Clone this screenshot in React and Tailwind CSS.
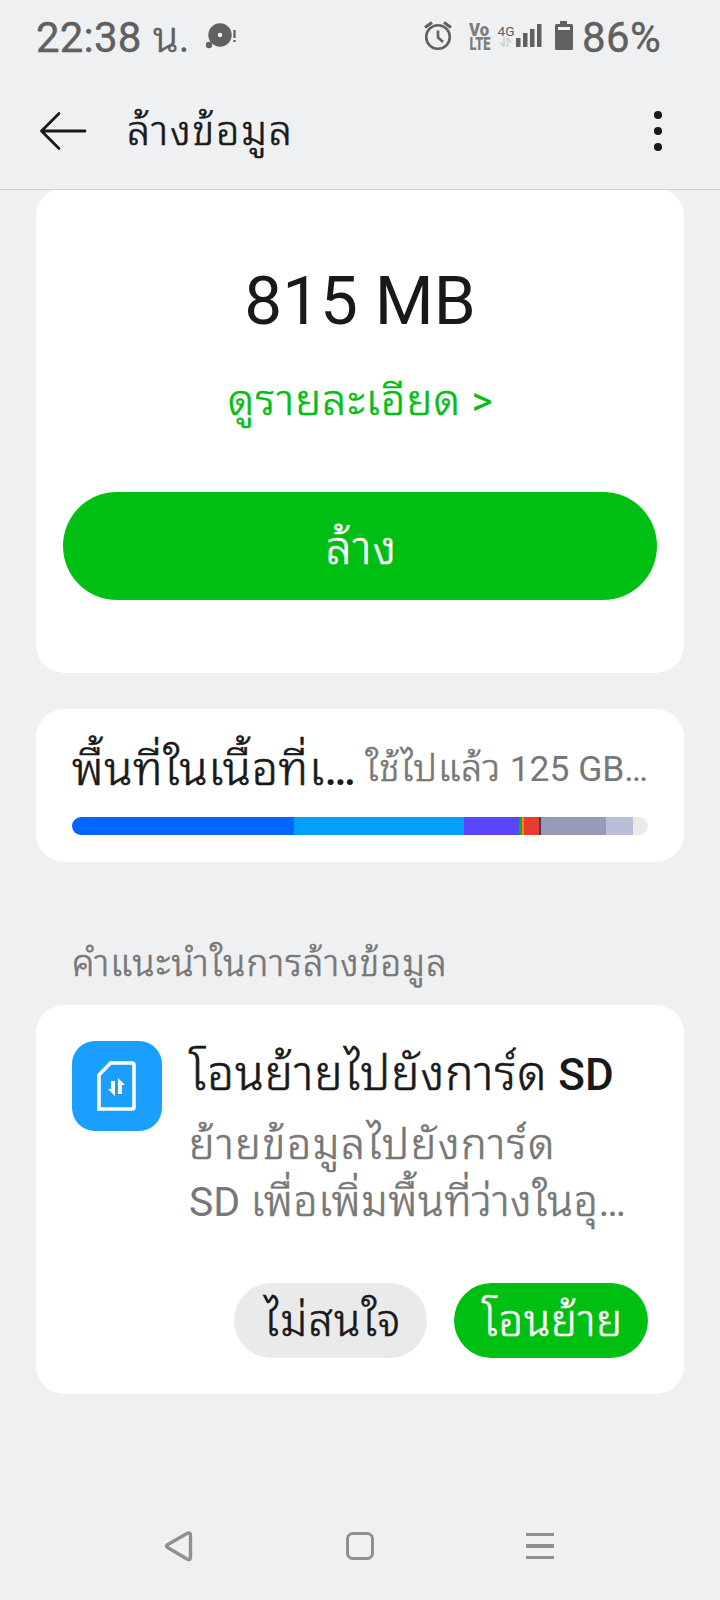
import React from 'react';

const segments = [
  'w-[222px] bg-[#0066ff]',
  'w-[170px] bg-[#00a0ff]',
  'w-[55px] bg-[#5b45ff]',
  'w-[3px] bg-[#00b81c]',
  'w-[2px] bg-[#ff8a00]',
  'w-[15px] bg-[#eb3b30]',
  'w-[2px] bg-[#3d4058]',
  'w-[65px] bg-[#979bb8]',
  'w-[27px] bg-[#b9bdd7]',
  'w-[15px] bg-[#eaeaea]',
];

function Thai({ className = '', children }) {
  return (
    <span className={`font-['Noto_Sans_Thai_Looped','Loma',sans-serif] font-light leading-[0] [-webkit-text-stroke:0.6px] ${className}`}>
      {children}
    </span>
  );
}

function StatusBar() {
  return (
    <div className="flex h-[76px] items-start text-[#5f6060]">
      <span className="ml-[36px] mt-[13px] w-[107px] text-[42px] leading-[50px] tracking-[0.2px] whitespace-nowrap [-webkit-text-stroke:0.4px]">22:38</span>
      <span className="ml-[10px] mt-[13px] w-[37px] text-[42px] leading-[50px] whitespace-nowrap"><Thai className="text-[42px]">น</Thai>.</span>
      <svg className="ml-[15px] mt-[20px]" width="34" height="32" viewBox="0 0 34 32">
        <circle cx="15" cy="15" r="7" fill="none" stroke="#5f6060" strokeWidth="9.4" />
        <circle cx="4" cy="25" r="3.2" fill="#5f6060" />
        <path d="M29.5 10v8M29.5 20v2" stroke="#5f6060" strokeWidth="2.2" />
      </svg>
      <div className="flex-1" />
      <svg className="mt-[20px] shrink-0" width="152" height="34" viewBox="0 0 152 34" fill="none">
        <g stroke="#5f6060" strokeWidth="2.6">
          <circle cx="14" cy="17" r="11.800" />
          <path d="M14 10.500v7l5 4.500" />
          <path d="M1 7.500L8 2.500M20 2.500l7 5" strokeWidth="3" />
        </g>
        <g fill="#7b7c7c" fontFamily="Roboto, sans-serif" fontWeight="900">
          <text x="45" y="15.500" fontSize="18.500" textLength="20" lengthAdjust="spacingAndGlyphs">Vo</text>
          <text x="45.500" y="30" fontSize="18.500" textLength="21" lengthAdjust="spacingAndGlyphs">LTE</text>
        </g>
        <text x="73.500" y="16" fontSize="13.500" fontFamily="Roboto, sans-serif" fill="#5f6060" textLength="17" lengthAdjust="spacingAndGlyphs">4G</text>
        <path d="M80 17v9M83.500 27v-9M76.500 22.500l3.500 4M87 22.500L83.500 18" stroke="#cfd0d1" strokeWidth="1.8" />
        <path d="M92 18h4.500v9h-4.500zM99 13h4.500v14h-4.500zM106 9h4.500v18h-4.500zM113 4h4.500v23h-4.500z" fill="#5f6060" />
        <path fillRule="evenodd" d="M136 1h7v3h4.500q1.500 0 1.500 1.500V28.500q0 1.500-1.500 1.500h-15q-1.500 0-1.500-1.500V5.500Q131 4 132.500 4H136zM134 7v3h12V7z" fill="#5f6060" />
      </svg>
      <span className="ml-[6px] mr-[60px] mt-[13px] w-[78px] text-[42px] leading-[50px] whitespace-nowrap tracking-[0.4px] [-webkit-text-stroke:0.4px]">86%</span>
    </div>
  );
}

function Header() {
  return (
    <header className="flex h-[114px] items-center border-b border-[#cfd0d2] text-[#191919]">
      <svg className="ml-[39px] -mt-[4px]" width="48" height="40" viewBox="0 0 48 40" fill="none" stroke="#191919" strokeWidth="2.8" strokeLinecap="round" strokeLinejoin="round">
        <path d="M20 2.500L2.500 20L20 37.500M2.500 20H46" />
      </svg>
      <h1 className="-mt-[1px] ml-[40px] h-[60px] flex-1 text-[40px] leading-[60px]"><Thai className="text-[41.500px] tracking-[1.6px]">ล้างข้อมูล</Thai></h1>
      <div className="mr-[58px] -mt-[4px] flex flex-col gap-2">
        <i className="size-2 rounded-full bg-[#191919]" />
        <i className="size-2 rounded-full bg-[#191919]" />
        <i className="size-2 rounded-full bg-[#191919]" />
      </div>
    </header>
  );
}

export default function App() {
  return (
    <div className="h-[1600px] w-[720px] overflow-hidden bg-[#eff0f2] font-['Roboto','Loma','Noto_Sans',sans-serif] text-[#191919]">
      <StatusBar />
      <Header />
      <main className="px-9">
        <section className="-mt-px h-[484px] overflow-hidden border-t border-[#cfd0d2]">
          <div className="-mt-[2px] h-[485px] rounded-[28px] bg-white px-[27px] pt-[73px] text-center">
            <p className="h-[80px] text-[67.500px] leading-[80px] whitespace-nowrap">815 MB</p>
            <p className="mt-[31px] h-[60px] text-[40px] leading-[60px] whitespace-nowrap text-[#00bf13]"><Thai className="text-[43px] tracking-[1.3px]">ดูรายละเอียด</Thai> &gt;</p>
            <button className="mt-[60px] h-[108px] w-full rounded-full bg-[#00bf13] pt-[6px] pl-[3px] text-[44px] leading-[60px] text-white"><Thai className="text-[46.500px] tracking-[1.2px]">ล้าง</Thai></button>
          </div>
        </section>
        <section className="mt-9 h-[153px] rounded-[28px] bg-white px-9 pt-[30px]">
          <div className="flex h-[78px] items-start whitespace-nowrap">
            <span className="mt-px w-[294px] text-[44px] leading-[60px]"><Thai className="text-[46.500px] tracking-[0.6px]">พื้นที่ในเนื้อที่เ</Thai><span className="font-medium">…</span></span>
            <span className="text-[35.400px] leading-[60px] text-[#777]"><Thai className="text-[37.500px] tracking-[0.8px]">ใช้ไปแล้ว</Thai> 125 GB…</span>
          </div>
          <div className="flex h-[18px] overflow-hidden rounded-full">
            {segments.map((s) => <div key={s} className={s} />)}
          </div>
        </section>
        <h2 className="mt-[72px] h-[71px] pl-9 text-[34px] leading-[60px] whitespace-nowrap text-[#777]"><Thai className="text-[36.500px] tracking-[1.150px]">คำแนะนำในการล้างข้อมูล</Thai></h2>
        <section className="h-[389px] rounded-[28px] bg-white px-9 pt-9">
          <div className="flex h-[242px] gap-[27px]">
            <svg className="shrink-0" width="90" height="90" viewBox="0 0 90 90">
              <rect width="90" height="90" rx="23" fill="#1a9fff" />
              <path d="M27 34L38.500 22H60q2 0 2 2V66q0 2-2 2H27z" fill="none" stroke="#fff" strokeWidth="3.600" />
              <path d="M39 40h4v15l-7-7h3zM46 37l7 7h-3v9h-4z" fill="#fff" />
            </svg>
            <div className="mt-px whitespace-nowrap">
              <h3 className="h-[66px] text-[44px] leading-[66px]"><Thai className="text-[47.500px] tracking-[0.950px]">โอนย้ายไปยังการ์ด</Thai> <span className="font-medium">SD</span></h3>
              <p className="mt-[9px] text-[41px] leading-[57px] text-[#777]"><Thai className="text-[43px] tracking-[1.5px]">ย้ายข้อมูลไปยังการ์ด</Thai><br />SD <Thai className="text-[42.500px] tracking-[0.7px]">เพื่อเพิ่มพื้นที่ว่างในอุ</Thai>…</p>
            </div>
          </div>
          <div className="flex justify-end gap-[27px]">
            <button className="h-[75px] w-[193px] rounded-full bg-[#eaeaea] pt-[4px] pl-[4px] text-[40px]"><Thai className="text-[43.500px] tracking-[1.2px]">ไม่สนใจ</Thai></button>
            <button className="h-[75px] w-[194px] rounded-full bg-[#00bf13] pt-[4px] pl-[3px] text-[40px] text-white"><Thai className="text-[43.500px] tracking-[0.750px]">โอนย้าย</Thai></button>
          </div>
        </section>
      </main>
      <nav className="mt-[136px] flex items-center pl-[164px]">
        <svg width="30" height="32" viewBox="0 0 30 32" fill="none" stroke="#8f9090" strokeWidth="3.400" strokeLinejoin="round"><path d="M3.500 14.700L23 3.500Q26.300 2 26.500 5V27.500Q26.300 30.500 23 29L3.500 17.500Q1.500 16 3.500 14.700z" /></svg>
        <div className="ml-[152px] size-7 rounded-[7px] border-[3.400px] border-[#8f9090]" />
        <div className="ml-[152px] flex flex-col gap-2">
          <i className="h-[3.500px] w-7 bg-[#8f9090]" /><i className="h-[3.500px] w-7 bg-[#8f9090]" /><i className="h-[3.500px] w-7 bg-[#8f9090]" />
        </div>
      </nav>
    </div>
  );
}
